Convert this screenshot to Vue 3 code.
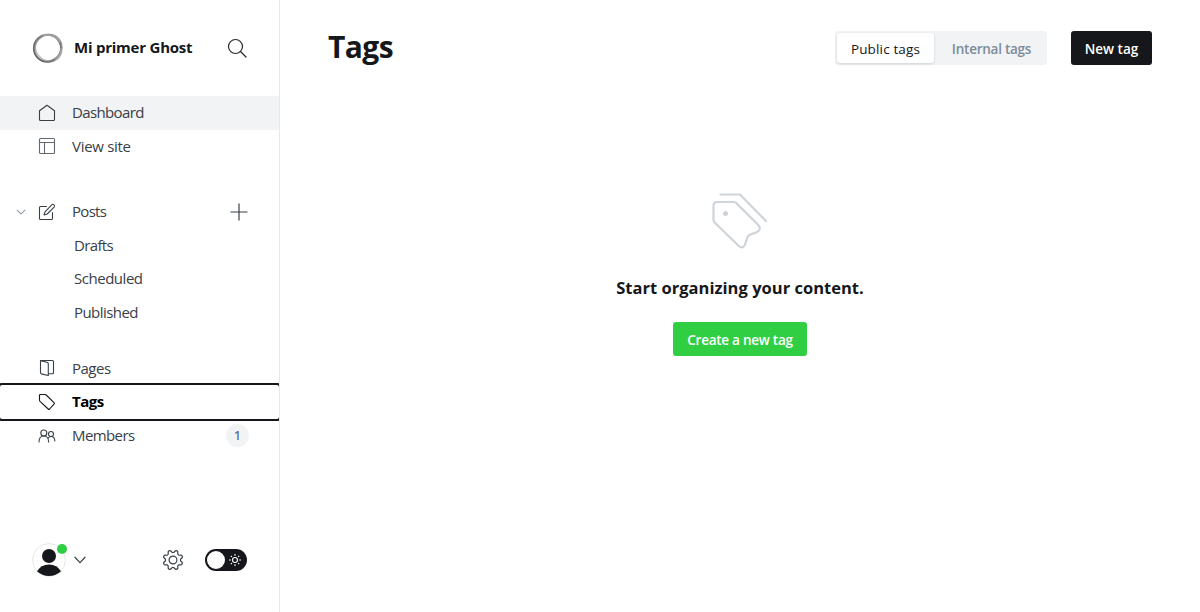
<script setup>
const views = [
  { label: 'Dashboard', icon: 'home', cls: 'hovered' },
  { label: 'View site', icon: 'layout', cls: '' },
]
const filters = ['Drafts', 'Scheduled', 'Published']

// Eight rounded teeth around the settings wheel.
const gearPoints = Array.from({ length: 96 }, (_, i) => {
  const a = (i / 96) * Math.PI * 2
  const wave = -Math.cos(8 * a)
  const r = 8.7 + 1.35 * Math.tanh(1.6 * wave)
  return `${(11 + r * Math.cos(a)).toFixed(2)},${(11 + r * Math.sin(a)).toFixed(2)}`
}).join(' ')
</script>

<template>
  <div class="app">
    <aside class="sidebar">
      <header class="brand">
        <svg class="logo" width="32" height="32" viewBox="0 0 32 32" fill="none">
          <circle cx="15.3" cy="16.3" r="13.6" stroke="#505050" stroke-width="1.600" opacity=".85" />
          <ellipse cx="16" cy="16" rx="14.2" ry="12.8" transform="rotate(-42 16 16)" stroke="#666" stroke-width="1.800" opacity=".6" />
          <ellipse cx="16.300" cy="15.700" rx="14" ry="12.600" transform="rotate(50 16 16)" stroke="#888" stroke-width="1.800" opacity=".55" />
          <path d="M10 3.500Q21 .5 28.500 10M29.500 16q0 8-6.500 11" stroke="#aaa" stroke-width="2" opacity=".8" />
        </svg>
        <span class="site-name">Mi primer Ghost</span>
        <svg class="search" width="20" height="20" viewBox="0 0 20 20" fill="none" stroke="#26292e" stroke-width="1.2" stroke-linecap="round">
          <circle cx="8.5" cy="8.5" r="7" /><path d="M13.5 13.5 19 19" />
        </svg>
      </header>

      <nav class="nav">
        <div class="group">
          <a v-for="v in views" :key="v.label" class="row" :class="v.cls">
            <svg v-if="v.icon === 'home'" class="icon" viewBox="0 0 18 18"><path d="M1.5 6.8 9 1.2l7.500 5.600v8.700a1 1 0 0 1-1 1h-13a1 1 0 0 1-1-1z" /></svg>
            <svg v-else class="icon soft" viewBox="0 0 18 18"><rect x="1.500" y="1.500" width="15" height="15" rx="1" /><path d="M1.500 5.500h15M6.500 5.500v11" /></svg>
            <span class="label" :class="v.icon">{{ v.label }}</span>
          </a>
        </div>

        <div class="group posts">
          <a class="row">
            <svg class="caret" width="10" height="6" viewBox="0 0 10 6"><path d="M.8.8 5 5 9.200.8" /></svg>
            <svg class="icon compose" viewBox="0 0 18 18"><path d="M8.500 3.500h-6a1 1 0 0 0-1 1v11a1 1 0 0 0 1 1h11a1 1 0 0 0 1-1V9.500" /><path d="m7 8.800 6.700-7q1.100-1 2.300 0 1.100 1.200.1 2.300L9.200 11l-3.200.9z" /></svg>
            <span class="label post">Posts</span>
            <svg class="plus" width="18" height="18" viewBox="0 0 18 18"><path d="M9 .5v17M.5 9h17" /></svg>
          </a>
          <a v-for="f in filters" :key="f" class="row sub"><span class="label" :class="f.toLowerCase()">{{ f }}</span></a>
        </div>

        <div class="group manage">
          <a class="row">
            <svg class="icon pages-icon" viewBox="0 0 18 18"><path d="M2.500 1.600 9 3.200q1.300.4 1.300 1.500v11.800l-6.800-1.600q-1-.3-1-1.300zM2.500 1.500h12q1 0 1 1v11.300q0 1-1 1h-3.500" /></svg>
            <span class="label pages">Pages</span>
          </a>
          <a class="row focused">
            <svg class="icon" viewBox="0 0 18 18"><path d="M1.500 2.300q0-.8.800-.8H7q.7 0 1.200.5l7.800 7.700q.7.700 0 1.400L11.600 16q-.7.700-1.400 0L2 8.300q-.5-.5-.5-1.200z" /></svg>
            <span class="label">Tags</span>
          </a>
          <a class="row">
            <svg class="icon" viewBox="0 0 18 18"><circle cx="5.800" cy="6" r="3" /><circle cx="13" cy="7" r="2.500" /><path d="M1 15q0-6 4.800-6t4.800 6M10.300 10.800q1-1.300 2.700-1.300 3.800 0 3.800 4.500" /></svg>
            <span class="label members">Members</span>
            <span class="count">1</span>
          </a>
        </div>
      </nav>

      <footer class="foot">
        <div class="avatar">
          <svg width="34" height="34" viewBox="0 0 34 34">
            <circle cx="17" cy="17" r="16.400" fill="#fff" stroke="#e4e6e8" />
            <circle cx="17" cy="13" r="7" fill="#15171a" />
            <path d="M5 28.300Q9 21.500 17 21.500t12 6.800Q24 33 17 33T5 28.300z" fill="#15171a" />
          </svg>
          <i class="status"></i>
        </div>
        <svg class="menu-caret" width="12" height="8" viewBox="0 0 12 8"><path d="m.7 1 5.300 5.700L11.300 1" /></svg>
        <svg class="gear" width="22" height="22" viewBox="0 0 22 22">
          <circle cx="11" cy="11" r="3.900" />
          <polygon :points="gearPoints" stroke-linejoin="round" />
        </svg>
        <div class="toggle">
          <i class="knob"></i>
          <svg width="14" height="14" viewBox="0 0 14 14"><circle cx="7" cy="7" r="2.500" /><path d="M7 1v1.800M7 11.200V13M1 7h1.800M11.200 7H13M2.800 2.800l1.100 1.100M10.100 10.100l1.100 1.100M2.800 11.200l1.100-1.100M10.100 3.900l1.100-1.100" /></svg>
        </div>
      </footer>
    </aside>

    <main class="main">
      <header class="topbar">
        <h1>Tags</h1>
        <div class="segments">
          <button class="seg on"><span>Public tags</span></button>
          <button class="seg"><span>Internal tags</span></button>
        </div>
        <button class="new"><span>New tag</span></button>
      </header>
      <section class="empty">
        <svg class="tags-art" width="58" height="58" viewBox="0 0 58 58">
          <path d="M9.500 2.500H29L55 29" />
          <path d="M6 10h16.500q1.800 0 3 1.200L47.300 33q3.400 4.500-.8 6.900l-7.500 2.900q-1.900.8-2.600 2.600l-2.600 7.600q-2.300 4.200-6 1L3.700 30.500Q2.500 29.300 2.500 27.500v-14Q2.500 10 6 10z" />
          <circle cx="14.500" cy="21.500" r="2.500" />
        </svg>
        <h4>Start organizing your content.</h4>
        <button class="create"><span>Create a new tag</span></button>
      </section>
    </main>
  </div>
</template>

<style>
body { background: #fff; }
</style>

<style scoped>
* { box-sizing: border-box; }
.app { display: flex; width: 1200px; height: 612px; overflow: hidden; font-family: "Open Sans", "Noto Sans", sans-serif; color: #15171a; }
.sidebar { display: flex; flex-direction: column; width: 280px; border-right: 1px solid #e6e9eb; overflow: hidden; }
.brand { display: flex; align-items: center; height: 96px; padding: 0 32px 0 32px; }
.site-name { margin-left: 10px; padding-bottom: 2px; font-size: 15px; font-weight: 700; letter-spacing: -.23px; white-space: nowrap; }
.search { margin-left: auto; }
.row { position: relative; display: flex; align-items: center; height: 33.600px; padding: 0 30px 0 38px; font-size: 15px; color: #394047; }
.hovered { background: #f1f3f4; }
.icon { width: 18px; height: 18px; flex: none; margin-right: 16px; fill: none; stroke: #394047; stroke-width: 1.100; stroke-linejoin: round; stroke-linecap: round; }
.soft { stroke: #626a70; }
.label { letter-spacing: -.6px; line-height: 20px; font-weight: 400; white-space: nowrap; }
.home, .scheduled, .members, .focused .label { padding-bottom: 2px; }
.home { letter-spacing: -.63px; }
.layout { letter-spacing: -.3px; }
.post { letter-spacing: -.7px; }
.drafts { letter-spacing: -.65px; }
.scheduled { letter-spacing: -.47px; }
.published { letter-spacing: -.55px; }
.pages { letter-spacing: -.5px; }
.posts { margin-top: 31.500px; }
.compose { margin-top: 1px; }
.caret { position: absolute; left: 16px; top: 14px; fill: none; stroke: #98a2ad; stroke-width: 1.100; }
.plus { margin-left: auto; margin-right: 1px; margin-top: 1px; stroke: #394047; stroke-width: 1.200; }
.sub { padding-left: 74px; }
.manage { margin-top: 22.500px; }
.focused { border-radius: 2px; outline: 2px solid #15171a; color: #000; }
.focused .icon { stroke: #15171a; }
.focused .label { font-weight: 700; letter-spacing: -.5px; }
.count { display: grid; place-items: center; width: 23px; height: 23px; margin-left: auto; border-radius: 50%; background: #f1f3f4; color: #5d7199; font-size: 12px; font-weight: 600; }
.foot { display: flex; align-items: center; height: 40px; margin-top: auto; margin-bottom: 32px; padding: 0 32px; }
.avatar { position: relative; width: 34px; height: 34px; }
.avatar svg, .toggle svg { display: block; }
.status { position: absolute; top: 1px; right: -1px; width: 10px; height: 10px; border-radius: 50%; background: #30cf43; }
.menu-caret { margin-left: 8px; fill: none; stroke: #394047; stroke-width: 1.200; }
.gear { margin-left: 76px; fill: none; stroke: #394047; stroke-width: 1.200; }
.toggle { display: flex; align-items: center; width: 42px; height: 22px; margin-left: 21px; padding: 0 5px 0 2px; justify-content: space-between; border-radius: 11px; background: #15171a; }
.toggle svg { fill: none; stroke: #fff; stroke-width: 1.100; }
.knob { width: 18px; height: 18px; border-radius: 50%; background: #fff; }
.main { flex: 1; display: flex; flex-direction: column; }
.topbar { display: flex; align-items: center; height: 96px; padding: 0 48px; }
h1 { margin: 0 auto 0 0; padding-bottom: 3px; font-size: 30px; line-height: 36px; font-weight: 700; letter-spacing: -.6px; }
button { height: 34px; padding: 2px 0 0; border: 0; border-radius: 3px; font: 600 13.500px "Open Sans", "Noto Sans", sans-serif; white-space: nowrap; }
.segments { display: flex; width: 212px; height: 34px; padding: 2px; border-radius: 3px; background: #f1f3f4; }
.seg { height: 30px; width: 97px; background: none; color: #7c8b9a; font-weight: 600; letter-spacing: -.15px; }
.seg + .seg { width: 111px; padding-left: 4px; letter-spacing: -.25px; }
.on { background: #fff; color: #15171a; font-weight: 500; letter-spacing: .15px; box-shadow: 0 1px 3px rgba(0, 0, 0, .14); }
.new { width: 81px; margin-left: 24px; background: #15171a; color: #fff; }
.empty { display: flex; flex-direction: column; align-items: center; padding-top: 96px; }
.tags-art { fill: none; stroke: #ced4d9; stroke-width: 2.200; stroke-linecap: round; stroke-linejoin: round; }
.tags-art circle { fill: #ced4d9; stroke: none; }
h4 { margin: 25px 0 22px; font-size: 16.500px; line-height: 25px; font-weight: 700; letter-spacing: .02px; white-space: nowrap; }
.create { width: 134px; background: #30cf43; color: #fff; letter-spacing: -.25px; }
</style>
